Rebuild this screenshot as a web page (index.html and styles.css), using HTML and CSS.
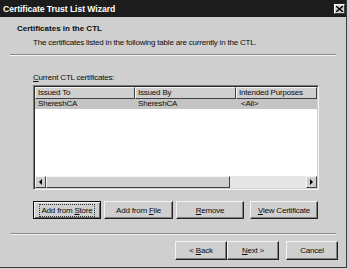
FILE: index.html
```html
<!DOCTYPE html>
<html>
<head>
<meta charset="utf-8">
<link rel="stylesheet" href="styles.css">
</head>
<body>
<div class="window">
  <div class="titlebar">
    <span class="title">Certificate Trust List Wizard</span>
    <span class="close"><svg width="7" height="6" viewBox="0 0 7 6"><path d="M0 0 L7 6 M7 0 L0 6" stroke="#000" stroke-width="1.4"/></svg></span>
  </div>
  <div class="header">
    <div class="h-title">Certificates in the CTL</div>
    <div class="h-desc">The certificates listed in the following table are currently in the CTL.</div>
  </div>
  <div class="sep"></div>
  <div class="content">
    <div class="label"><u>C</u>urrent CTL certificates:</div>
    <div class="list">
      <div class="cols">
        <div class="col c1">Issued To</div>
        <div class="col c2">Issued By</div>
        <div class="col c3">Intended Purposes</div>
      </div>
      <div class="row sel">
        <div class="cell c1">ShereshCA</div>
        <div class="cell c2">ShereshCA</div>
        <div class="cell c3">&lt;All&gt;</div>
      </div>
      <div class="spacer"></div>
      <div class="hscroll">
        <div class="arrow"><svg width="3" height="6" viewBox="0 0 3 6"><path d="M3 0 L0 3 L3 6 Z" fill="#000"/></svg></div>
        <div class="thumb"></div>
        <div class="track"></div>
        <div class="arrow"><svg width="3" height="6" viewBox="0 0 3 6"><path d="M0 0 L3 3 L0 6 Z" fill="#000"/></svg></div>
      </div>
    </div>
    <div class="actions">
      <div class="btn focus b1"><span>Add from <u>S</u>tore</span></div>
      <div class="btn b2"><span>Add from <u>F</u>ile</span></div>
      <div class="btn b3"><span><u>R</u>emove</span></div>
      <div class="btn b4"><span><u>V</u>iew Certificate</span></div>
    </div>
  </div>
  <div class="sep sep2"></div>
  <div class="footer">
    <div class="btn nav"><span>&lt; <u>B</u>ack</span></div>
    <div class="btn nav"><span><u>N</u>ext &gt;</span></div>
    <div class="btn nav cancel"><span>Cancel</span></div>
  </div>
</div>
</body>
</html>
```
FILE: styles.css
```css
html, body {
  margin: 0;
  padding: 0;
  background: #cfcfcf;
  width: 350px;
  height: 269px;
  overflow: hidden;
  font-family: "Liberation Sans", Arial, sans-serif;
  font-size: 8px;
  letter-spacing: -0.2px;
  color: #0c0c0c;
}
.window {
  width: 347px;
  height: 268px;
  box-sizing: border-box;
  border-right: 1px solid #3a3a3a;
  border-bottom: 1px solid #3a3a3a;
  background: #cfcfcf;
  display: flex;
  flex-direction: column;
}
.titlebar {
  height: 17px;
  background: #1c1c1c;
  display: flex;
  align-items: center;
  justify-content: space-between;
  padding: 0 1px 0 3px;
  flex-shrink: 0;
}
.title {
  color: #fff;
  font-weight: bold;
  font-size: 8.6px;
  letter-spacing: -0.05px;
}
.close {
  width: 11px;
  height: 10px;
  box-sizing: border-box;
  background: #cfcfcf;
  border: 1px solid;
  border-color: #fff #404040 #404040 #fff;
  display: flex;
  align-items: center;
  justify-content: center;
}
.header {
  height: 37px;
  box-sizing: border-box;
  padding: 6px 0 0 17px;
  flex-shrink: 0;
}
.h-title {
  font-weight: bold;
  line-height: 12px;
  letter-spacing: 0;
}
.h-desc {
  padding-left: 16px;
  line-height: 12px;
  margin-top: 2px;
}
.sep {
  margin: 0 10px;
  height: 0;
  border-top: 1px solid #8a8a8a;
  border-bottom: 1px solid #f4f4f4;
  flex-shrink: 0;
}
.content {
  padding: 16px 0 0 33px;
  flex-shrink: 0;
}
.label {
  line-height: 12px;
  margin-bottom: 1px;
}
.list {
  width: 286px;
  height: 105px;
  box-sizing: border-box;
  background: #fff;
  border: 1px solid;
  border-color: #7a7a7a #f4f4f4 #f4f4f4 #7a7a7a;
  box-shadow: inset 1px 1px 0 #2e2e2e, inset -1px -1px 0 #cfcfcf;
  padding: 1px;
  display: flex;
  flex-direction: column;
  overflow: hidden;
}
.cols {
  display: flex;
  height: 12px;
  flex-shrink: 0;
}
.col {
  background: #cfcfcf;
  box-sizing: border-box;
  border: 1px solid;
  border-color: #f4f4f4 #404040 #404040 #f4f4f4;
  line-height: 10px;
  padding-left: 2px;
  white-space: nowrap;
  overflow: hidden;
}
.c1 { width: 100px; flex-shrink: 0; }
.c2 { width: 101px; flex-shrink: 0; }
.c3 { flex: 1; }
.row {
  display: flex;
  height: 10px;
  line-height: 10px;
  flex-shrink: 0;
}
.row.sel { background: #c4c4c4; }
.cell {
  padding-left: 3px;
  box-sizing: border-box;
  white-space: nowrap;
}
.cell.c3 { padding-left: 5px; }
.spacer { flex: 1; }
.hscroll {
  height: 12px;
  display: flex;
  flex-shrink: 0;
}
.arrow, .thumb {
  background: #cfcfcf;
  box-sizing: border-box;
  border: 1px solid;
  border-color: #f4f4f4 #404040 #404040 #f4f4f4;
  display: flex;
  align-items: center;
  justify-content: center;
}
.arrow { width: 11px; }
.thumb { width: 184px; }
.track {
  flex: 1;
  background: #e6e6e6;
}
.actions {
  display: flex;
  margin-top: 11px;
  height: 18px;
}
.btn {
  height: 18px;
  box-sizing: border-box;
  background: #cfcfcf;
  border: 1px solid;
  border-color: #f4f4f4 #222 #222 #f4f4f4;
  box-shadow: inset -1px -1px 0 #808080;
  display: flex;
  align-items: center;
  justify-content: center;
  white-space: nowrap;
}
.b1 { width: 68px; }
.b2 { width: 69px; margin-left: 3px; }
.b3 { width: 68px; margin-left: 3px; }
.b4 { width: 68px; margin-left: 6px; }
.btn.focus {
  border: 1px solid #111;
  box-shadow: inset 1px 1px 0 #f4f4f4, inset -1px -1px 0 #606060;
}
.btn.focus span {
  outline: 1px dotted #333;
  outline-offset: 1px;
}
.sep2 { margin-top: 14px; }
.footer {
  display: flex;
  justify-content: flex-end;
  padding: 6px 8px 0 0;
}
.nav {
  width: 52px;
  height: 19px;
}
.cancel { margin-left: 7px; }
```
